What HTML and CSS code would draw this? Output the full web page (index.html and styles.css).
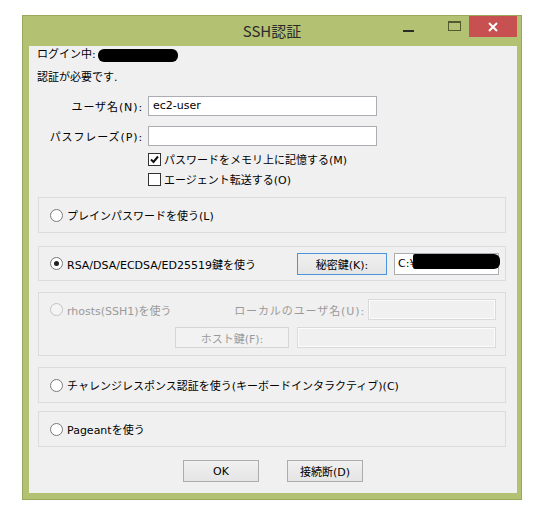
FILE: index.html
```html
<!DOCTYPE html>
<html lang="ja">
<head>
    <meta charset="UTF-8">
    <title>SSH認証</title>
    <link rel="stylesheet" href="styles.css">
</head>
<body>

    <div class="window">
        <div class="titlebar">
            <span class="title">SSH認証</span>
            <div class="controls">
                <span class="min"></span>
                <span class="max"></span>
                <span class="close">
                    <svg width="10" height="10" viewBox="0 0 10 10"><path d="M1 1 L9 9 M9 1 L1 9" stroke="#fff" stroke-width="2" fill="none"/></svg>
                </span>
            </div>
        </div>

        <div class="client">
            <p class="line">ログイン中:<span class="redact"></span></p>
            <p class="line second">認証が必要です.</p>

            <div class="field first">
                <label>ユーザ名(N):</label>
                <div class="input">ec2-user</div>
            </div>
            <div class="field">
                <label>パスフレーズ(P):</label>
                <div class="input"></div>
            </div>

            <div class="check first">
                <span class="box"><svg width="11" height="11" viewBox="0 0 11 11"><path d="M2 5.5 L4.5 8 L9 2.5" stroke="#111" stroke-width="2" fill="none"/></svg></span>
                パスワードをメモリ上に記憶する(M)
            </div>
            <div class="check">
                <span class="box"></span>
                エージェント転送する(O)
            </div>

            <div class="group g1">
                <span class="radio"></span>プレインパスワードを使う(L)
            </div>

            <div class="group g2">
                <div class="opt"><span class="radio on"></span>RSA/DSA/ECDSA/ED25519鍵を使う</div>
                <button class="btn focus key">秘密鍵(K):</button>
                <div class="input keyfile">C:¥<span class="redact wide"></span></div>
            </div>

            <div class="group g3">
                <div class="row">
                    <div class="opt off"><span class="radio dis"></span>rhosts(SSH1)を使う</div>
                    <span class="lbl off">ローカルのユーザ名(U):</span>
                    <div class="input dis local"></div>
                </div>
                <div class="row second">
                    <button class="btn dis host">ホスト鍵(F):</button>
                    <div class="input dis hostfile"></div>
                </div>
            </div>

            <div class="group g4">
                <span class="radio"></span>チャレンジレスポンス認証を使う(キーボードインタラクティブ)(C)
            </div>

            <div class="group g5">
                <span class="radio"></span>Pageantを使う
            </div>

            <div class="actions">
                <button class="btn">OK</button>
                <button class="btn">接続断(D)</button>
            </div>
        </div>
    </div>

</body>
</html>
```

FILE: styles.css
```css
* {
    padding: 0;
    margin: 0;
    box-sizing: border-box;
}
body {
    background: #fff;
    font-family: "DejaVu Sans", "Noto Sans CJK JP", sans-serif;
    font-size: 11px;
    color: #000;
}
.window {
    width: 500px;
    height: 485px;
    margin: 15px 0 0 22px;
    background: #b3c172;
    border: 1px solid #97a85c;
    display: flex;
    flex-direction: column;
}
.titlebar {
    height: 30px;
    display: grid;
    grid-template-columns: 1fr auto 1fr;
}
.title {
    grid-column: 2;
    font-family: "Noto Sans CJK JP", sans-serif;
    font-size: 15px;
    line-height: 30px;
    color: #2b2b2b;
}
.controls {
    grid-column: 3;
    justify-self: end;
    display: flex;
    align-items: flex-start;
    margin-right: 4px;
}
.min {
    width: 11px;
    height: 2px;
    margin: 14px 34px 0 0;
    background: #2b2b2b;
}
.max {
    width: 13px;
    height: 10px;
    margin: 5px 8px 0 0;
    border: 1px solid #505a30;
    border-top-width: 2px;
}
.close {
    width: 48px;
    height: 21px;
    background: #c75050;
    display: flex;
    align-items: center;
    justify-content: center;
}
.client {
    flex: 1;
    margin: 0 4px 6px 6px;
    background: #f0f0f0;
}
.line {
    line-height: 18px;
    padding-left: 8px;
}
.line.second {
    margin-top: 5px;
}
.redact {
    display: inline-block;
    width: 80px;
    height: 13px;
    margin-left: 2px;
    background: #000;
    border-radius: 6px;
    vertical-align: middle;
}
.field {
    display: flex;
    align-items: center;
    margin-top: 10px;
}
.field.first {
    margin-top: 9px;
}
.field label {
    width: 114px;
    margin-right: 5px;
    text-align: right;
    letter-spacing: 0.9px;
}
.input {
    height: 20px;
    padding: 0 4px;
    line-height: 18px;
    background: #fff;
    border: 1px solid #abadb3;
}
.field .input {
    width: 229px;
}
.check {
    display: flex;
    align-items: center;
    height: 20px;
    padding-left: 119px;
}
.check.first {
    margin-top: 3px;
}
.box {
    width: 13px;
    height: 13px;
    margin-right: 3px;
    border: 1px solid #333;
    background: #fff;
}
.box svg {
    display: block;
}
.group {
    margin: 8px 11px 0 9px;
    height: 36px;
    padding-left: 11px;
    border: 1px solid #dcdcdc;
    display: flex;
    align-items: center;
}
.radio {
    width: 13px;
    height: 13px;
    margin-right: 4px;
    border: 1px solid #7a7a7a;
    border-radius: 50%;
    background: #fff;
    flex-shrink: 0;
    display: flex;
    align-items: center;
    justify-content: center;
}
.radio.on::after {
    content: "";
    width: 5px;
    height: 5px;
    border-radius: 50%;
    background: #222;
}
.radio.dis {
    border-color: #c4c4c4;
    background: #f4f4f4;
}
.opt {
    display: flex;
    align-items: center;
}
.off {
    color: #9a9a9a;
}
.btn {
    height: 22px;
    font: inherit;
    color: #000;
    border: 1px solid #acacac;
    background: linear-gradient(#f0f0f0, #e5e5e5);
}
.btn.focus {
    border-color: #4a94dc;
}
.btn.dis {
    color: #9a9a9a;
    border-color: #d5d5d5;
    background: #f2f2f2;
}
.g2 {
    margin-top: 13px;
    height: 35px;
}
.g2 .opt {
    width: 247px;
}
.key {
    width: 90px;
}
.keyfile {
    position: relative;
    width: 105px;
    height: 22px;
    margin-left: 7px;
    padding-left: 3px;
    line-height: 20px;
}
.redact.wide {
    position: absolute;
    top: 0;
    left: 18px;
    right: -2px;
    width: auto;
    height: 15px;
    margin: 0;
    border-radius: 2px 6px 6px 2px;
}
.g3 {
    margin-top: 11px;
    height: 64px;
    display: block;
    padding-top: 6px;
}
.row {
    display: flex;
    align-items: center;
    height: 21px;
}
.row .opt {
    width: 183px;
}
.lbl {
    width: 132px;
    margin-right: 3px;
    text-align: right;
    letter-spacing: 0.9px;
}
.input.dis {
    height: 21px;
    background: #f0f0f0;
    border: 1px solid #dadada;
    box-shadow: inset 0 0 0 1px #fbfbfb;
}
.local {
    width: 128px;
}
.row.second {
    margin-top: 7px;
    padding-left: 125px;
}
.host {
    width: 114px;
    height: 21px;
    margin-right: 8px;
}
.hostfile {
    width: 199px;
}
.g4 {
    margin-top: 11px;
}
.g5 {
    margin-top: 8px;
}
.actions {
    display: flex;
    justify-content: center;
    gap: 28px;
    margin-top: 13px;
}
.actions .btn {
    width: 76px;
}
```
